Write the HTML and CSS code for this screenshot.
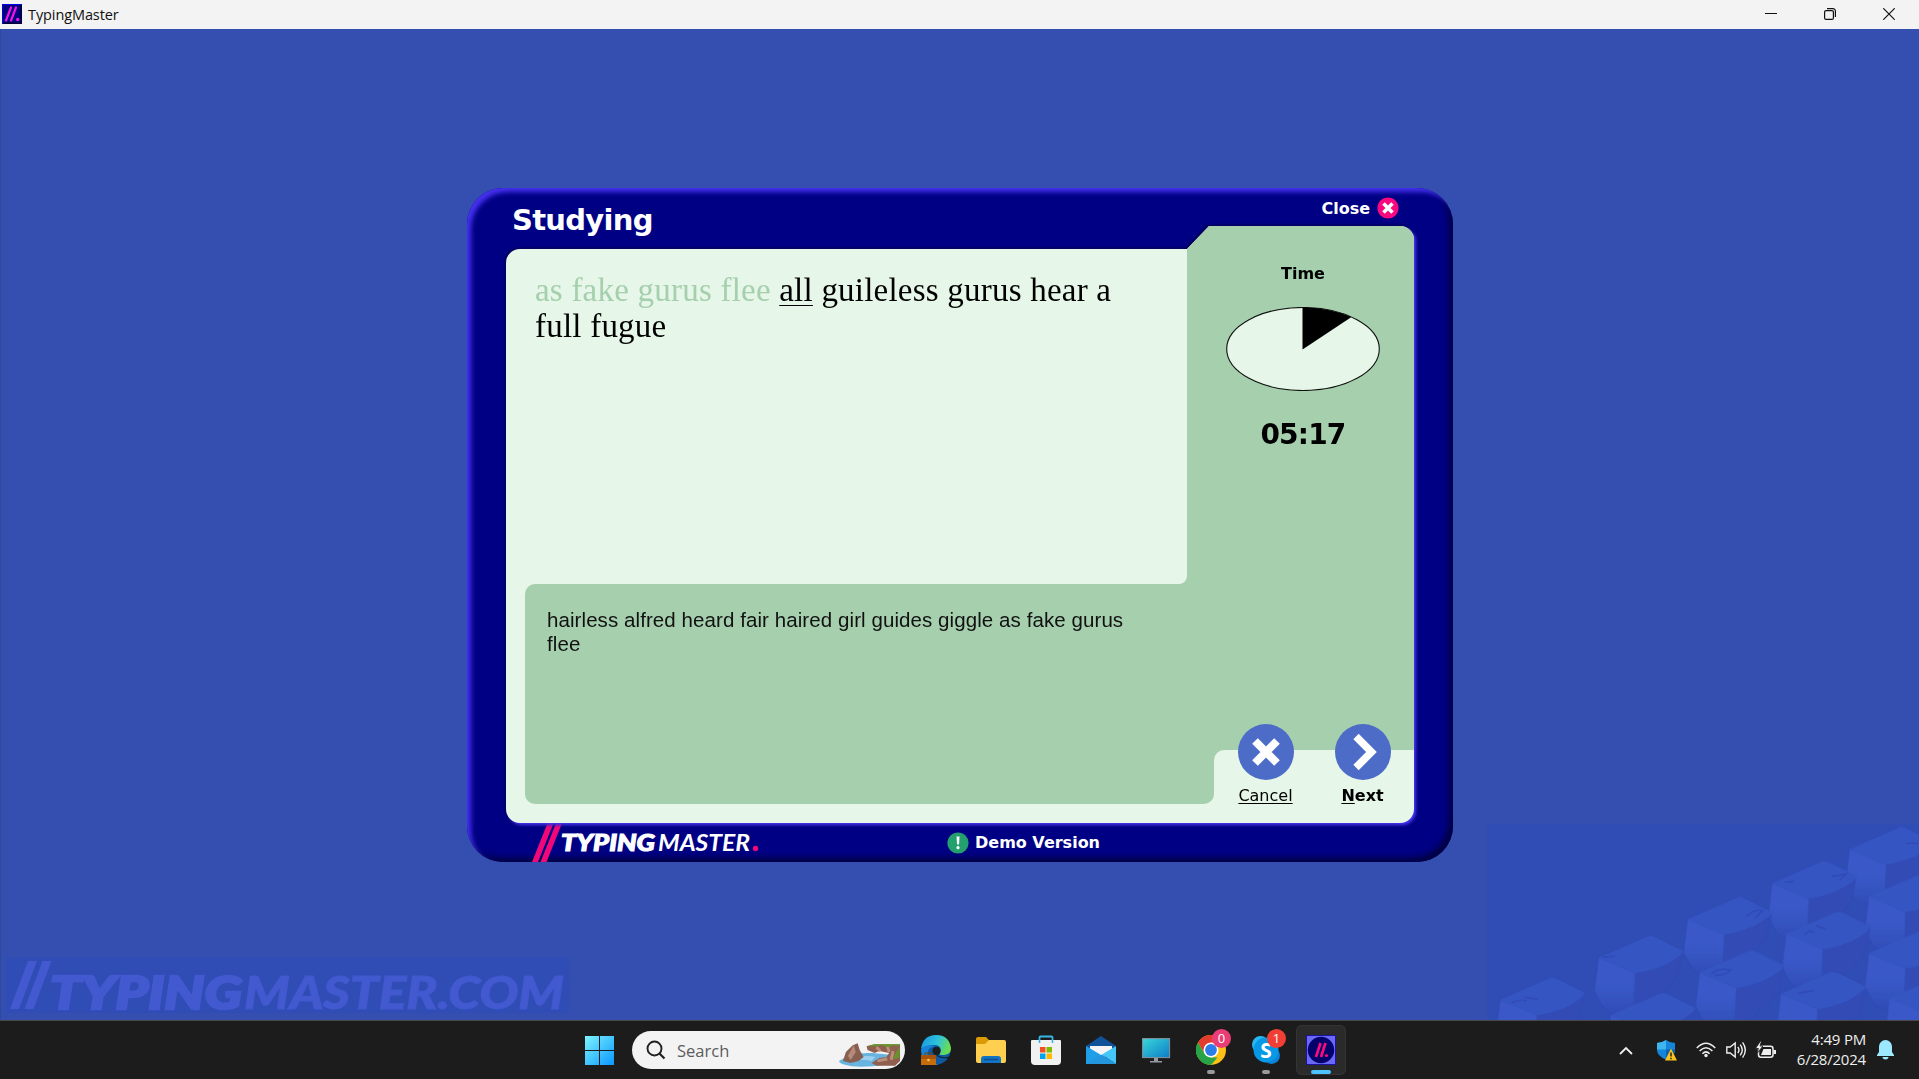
FILE: index.html
```html
<!DOCTYPE html>
<html lang="en">
<head>
<meta charset="utf-8">
<title>TypingMaster</title>
<link rel="stylesheet" href="styles.css">
</head>
<body>
<header class="titlebar">
  <svg class="app-icon" viewBox="0 0 20 20"><rect width="20" height="20" fill="#0000f0"/><rect x="1" y="1" width="19" height="19" fill="#020038"/><rect x="1" y="1" width="17.500" height="17.500" fill="#05007c"/><path d="M4 16.500 9 3.500M9 16.500l5-13" stroke="#f312e8" stroke-width="2.200" stroke-linecap="round"/><circle cx="15.700" cy="15.500" r="1.700" fill="#f312e8"/></svg>
  <span class="window-title">TypingMaster</span>
  <div class="window-buttons">
    <svg viewBox="0 0 12 12"><path d="M0 5.500h12" stroke="#111"/></svg>
    <svg viewBox="0 0 12 12"><rect x=".6" y="2.600" width="8.800" height="8.800" rx="1.500" fill="none" stroke="#111" stroke-width="1.200"/><path d="M3 .6h6a2.400 2.400 0 0 1 2.400 2.400v6" fill="none" stroke="#111" stroke-width="1.200"/></svg>
    <svg viewBox="0 0 12 12"><path d="M.3.3l11.400 11.400M11.700.3.3 11.700" stroke="#111" stroke-width="1.200"/></svg>
  </div>
</header>

<main class="desktop">
  <section class="dialog">
    <div class="dialog-head">
      <h1>Studying</h1>
      <div class="close"><span>Close</span><svg viewBox="0 0 22 22"><circle cx="11" cy="11" r="10.600" fill="#f9087f"/><path d="M6.500 6.500l9 9M15.500 6.500l-9 9" stroke="#fff" stroke-width="3.600"/></svg></div>
    </div>
    <div class="board">
      <svg class="board-shape" viewBox="0 0 908 597">
        <path fill="#e6f6e8" d="M14 23H681L703 0H894A14 14 0 0 1 908 14V583A14 14 0 0 1 894 597H14A14 14 0 0 1 0 583V37A14 14 0 0 1 14 23Z"/>
        <path fill="#a5cfad" d="M681 23 703 0H894A14 14 0 0 1 908 14V524H718A10 10 0 0 0 708 534V568A10 10 0 0 1 698 578H29A10 10 0 0 1 19 568V368A10 10 0 0 1 29 358H673A8 8 0 0 0 681 350Z"/>
      </svg>
      <div class="texts">
        <p class="prompt"><span class="done">as fake gurus flee</span> <span class="current">all</span> guileless gurus hear a<br>full fugue</p>
        <p class="typed">hairless alfred heard fair haired girl guides giggle as fake gurus<br>flee</p>
      </div>
      <aside class="side">
        <h2>Time</h2>
        <svg class="pie" viewBox="0 0 154 84"><ellipse cx="77" cy="42" rx="76.300" ry="41.500" fill="#e6f6e8" stroke="#111" stroke-width="1.100"/><path d="M76.500 42.500V.5Q104 .5 125.500 10Z" fill="#000"/></svg>
        <div class="clock">05:17</div>
        <div class="actions">
          <div class="action"><svg viewBox="0 0 56 56"><circle cx="28" cy="28" r="28" fill="#4c6cc8"/><path d="M17 17l22 22M39 17 17 39" stroke="#fff" stroke-width="8"/></svg><span class="cancel">Cancel</span></div>
          <div class="action"><svg viewBox="0 0 56 56"><circle cx="28" cy="28" r="28" fill="#4c6cc8"/><path d="M21 12.500 36.500 28 21 43.500" fill="none" stroke="#fff" stroke-width="7.500"/></svg><span class="next"><u>N</u>ext</span></div>
        </div>
      </aside>
    </div>
    <div class="dialog-foot">
      <svg class="logo" viewBox="0 0 230 40"><path d="M16 0h6L6 40H0ZM24.500 0h6L14.500 40h-6Z" fill="#f0087a"/><text x="29" y="29" class="logo-heavy" textLength="94" lengthAdjust="spacingAndGlyphs">TYPING</text><text x="126" y="29" class="logo-light" textLength="92" lengthAdjust="spacingAndGlyphs">MASTER</text><circle cx="223.500" cy="26.500" r="2.700" fill="#f0087a"/></svg>
      <div class="demo"><svg viewBox="0 0 22 22"><circle cx="11" cy="11" r="10.600" fill="#23a06e"/><path d="M9.500 4.500h3l-.5 8h-2z" fill="#fff"/><circle cx="11" cy="15.700" r="1.600" fill="#fff"/></svg><span>Demo Version</span></div>
    </div>
  </section>

  <svg class="watermark" viewBox="0 0 563 56"><g fill="#4259cf"><path d="M22 4h9L13 52H4ZM36.500 4h9L27.500 52h-9Z"/><text x="44" y="52" class="wm-heavy" textLength="192" lengthAdjust="spacingAndGlyphs">TYPING</text><text x="238" y="52" class="wm-bold" textLength="320" lengthAdjust="spacingAndGlyphs">MASTER.COM</text></g></svg>

  <svg class="keys" viewBox="52 12 1295 588">
    <defs><filter id="soft" x="-5%" y="-5%" width="110%" height="110%"><feGaussianBlur stdDeviation="2"/></filter>
    <linearGradient id="front" x1="0" y1="0" x2="0" y2="1"><stop offset=".45" stop-color="#3a59c8"/><stop offset="1" stop-color="#304cb5"/></linearGradient>
    <g id="key"><path d="M112 46 256-18 240 60 190 110 106 185Z" fill="#304cb5"/><path d="M4 0 112 46 108 160 70 175 20 150-8 100Z" fill="url(#front)"/><path d="M2 0 148-64Q160-68 172-64L256-22Q258-10 200 22 150 42 112 46Z" fill="#3655c2"/></g></defs>
    <g filter="url(#soft)">
      <use href="#key" x="1136" y="88"/><use href="#key" x="904" y="190"/><use href="#key" x="1194" y="230"/>
      <use href="#key" x="650" y="298"/><use href="#key" x="946" y="342"/><use href="#key" x="1194" y="400"/>
      <use href="#key" x="383" y="414"/><use href="#key" x="686" y="458"/><use href="#key" x="930" y="522"/><use href="#key" x="1256" y="535"/>
      <use href="#key" x="88" y="540"/><use href="#key" x="420" y="586"/>
      <g fill="none" stroke="#304cb8" stroke-width="5"><path d="M125 548q30-12 45-4m-5-12 40 6M400 412l35-4M830 290q22-24 48-18l-22 22M725 462q20-20 58-12-20 18-48 16M1085 170l42-8-18 20M945 188l28-4M1005 345q12-22 28-6m6-22 28 10M985 520l45-8M1310 70h35"/></g>
    </g>
  </svg>
</main>

<footer class="taskbar">
  <nav class="apps">
    <svg class="start" viewBox="0 0 29 29"><defs><linearGradient id="win" x2="1" y2="1"><stop stop-color="#7df4ff"/><stop offset="1" stop-color="#0a98ff"/></linearGradient></defs><path fill="url(#win)" d="M0 0h14v14H0zM15 0h14v14H15zM0 15h14v14H0zM15 15h14v14H15z"/></svg>
    <div class="search">
      <svg class="lens" viewBox="0 0 20 20"><circle cx="8.500" cy="8.500" r="7" fill="none" stroke="#222" stroke-width="1.900"/><path d="m13.500 13.500 5 5" stroke="#222" stroke-width="2.200"/></svg>
      <span>Search</span>
      <svg class="cove" viewBox="0 0 64 24"><path d="M0 18q12-9 34-8l20 2-6 10q-30 4-42 0-6-2-6-4z" fill="#68b4e0"/><path d="M10 17q14-6 27-3l-4 4q-12-3-20 2z" fill="#9bd1ee"/><path d="M4 18 7 9 14 2l5-2 2 7 4 7-5 4-8 2z" fill="#886052"/><path d="m15 2-6 11 3 4 5-8z" fill="#b58a78"/><path d="M28 3l8-2h26v17l-5 5H38l-5-3 8-5 7-1 3-4-10-2-5 2-7-3z" fill="#8f6050"/><path d="m38 4 4 4m7-5 2 6m-12 9 10-2m6-8-2 9" stroke="#ba8f7b" stroke-width="3"/><path d="m28 3 8-2h26l-1 2-6-1-4 2-8-2-5 1zM62 4l-1 11-6 1 3-7z" fill="#66962a"/></svg>
    </div>
    <div class="app"><svg viewBox="0 0 30 30"><defs><linearGradient id="e" x2="1" y2=".3"><stop stop-color="#1494e4"/><stop offset=".6" stop-color="#2ec3da"/><stop offset="1" stop-color="#67dc57"/></linearGradient></defs><circle cx="15" cy="15" r="14.500" fill="#0c59a4"/><path d="M0 14Q2 0 15 0 28 0 30 13c0 6-4 7-9 7-3 0-3-1-2-3 2-4-1-7-5-7-6 0-12 2-14 4z" fill="url(#e)"/><path d="M9 13c-5 5-2 14 9 17H10Q0 26 0 15c2-4 8-6 14-4z" fill="#1683d8"/><circle cx="15.500" cy="16" r="4.200" fill="#1b1d1f"/><path d="M16 20q7 4 13 1l-1 2q-8 1-12-2z" fill="#1b1d1f"/><rect y="20" width="15" height="10" fill="#c56c0c"/><path d="M0 20h15v4H0z" fill="#a8530a"/><path d="M4 20v-2h6v2" fill="none" stroke="#74400c"/><circle cx="7.500" cy="25" r="1.300" fill="#ffc843"/></svg></div>
    <div class="app"><svg viewBox="0 0 30 30"><path d="M0 4q0-2 2-2h8l3 3H28v8H0z" fill="#dc9a07"/><path d="M0 9h9l4-4h15q2 0 2 2v19q0 2-2 2H2q-2 0-2-2z" fill="#ffcf50"/><path d="M5 28v-4q0-3 3-3h14q3 0 3 3v4z" fill="#1474c4"/><path d="M8 24.500h14" stroke="#0b4f91" stroke-width="1.500"/></svg></div>
    <div class="app"><svg viewBox="0 0 30 30"><path d="M8.500 8V2.500q0-1 1-1h11q1 0 1 1V8" fill="none" stroke="#36b5e9" stroke-width="1.800"/><path d="M0 6q0-1 1-1h28q1 0 1 1v20q0 4-4 4H4q-4 0-4-4z" fill="#f1f1f1"/><path d="M8.500 8V5M21.500 8V5" stroke="#36b5e9" stroke-width="1.600"/><path d="M9 12h5.500v5.500H9z" fill="#f25022"/><path d="M15.500 12H21v5.500h-5.500z" fill="#7fba00"/><path d="M9 18.500h5.500V24H9z" fill="#00a4ef"/><path d="M15.500 18.500H21V24h-5.500z" fill="#ffb900"/></svg></div>
    <div class="app"><svg viewBox="0 0 30 30"><path d="M0 11 15 1l15 10-6 8H6z" fill="#10529a"/><path d="M4 11h22v8l-11 4-11-4z" fill="#f4f4f6"/><path d="M0 11 30 29H0z" fill="#1e9fe8"/><path d="M30 11 16 19.500 30 29z" fill="#45c6f8"/><path d="M16 19.500 30 29H0l15-9z" fill="#2396de"/></svg></div>
    <div class="app"><svg viewBox="0 0 30 30"><defs><linearGradient id="mon" x2="1" y2="1"><stop stop-color="#37d8d8"/><stop offset="1" stop-color="#0e7bc8"/></linearGradient></defs><rect x="1.600" y="3.600" width="27" height="19" fill="url(#mon)" stroke="#8396a0" stroke-width="1"/><path d="M13 23h4v3h4v1.500H9V26h4z" fill="#9299a0"/></svg></div>
    <div class="app running"><svg viewBox="0 0 30 30"><circle cx="15" cy="15" r="15" fill="#fbc116"/><path d="M2 7.500A15 15 0 0 1 28 7.500H15L8.500 18.750z" fill="#e33b2e"/><path d="M2 7.500 8.500 18.750 15 22.500h6.500L15 30A15 15 0 0 1 2 7.500z" fill="#27a348"/><circle cx="15" cy="15" r="7.500" fill="#fff"/><circle cx="15" cy="15" r="5.900" fill="#2b7de9"/></svg><b class="badge pink">0</b></div>
    <div class="app running"><svg viewBox="0 0 30 30"><circle cx="9.500" cy="9.500" r="8.500" fill="#28b7f2"/><circle cx="20.500" cy="20.500" r="8.500" fill="#0a83d9"/><circle cx="15" cy="15" r="12.500" fill="#0799e5"/><text x="15" y="22.500" class="skype">S</text></svg><b class="badge red">1</b></div>
    <div class="app active"><svg viewBox="0 0 30 30"><rect x=".5" y=".5" width="29" height="29" fill="#6a68f6" stroke="#1a12a0"/><circle cx="15" cy="15" r="13.200" fill="#04006c"/><path d="m10 22 4.500-14M15 22l4.500-14" stroke="#fa0b7e" stroke-width="2.600"/><circle cx="20.500" cy="20.500" r="1.600" fill="#fa0b7e"/></svg></div>
  </nav>
  <div class="tray">
    <svg class="chev" viewBox="0 0 14 9"><path d="m1 8 6-6 6 6" fill="none" stroke="#eee" stroke-width="1.800"/></svg>
    <svg class="shield" viewBox="0 0 20 21"><path d="M0 3q5 0 9-3 4 3 9 3v7q0 6-9 9.500Q0 16 0 10z" fill="#1485d8"/><path d="M9 0Q5 3 0 3v6.500h9z" fill="#3fb5f0"/><path d="M9 9.500h9V10q0 6-9 9.500z" fill="#0b62b4"/><path d="M14 8.500 20 20.500H8z" fill="#fcc21a"/><path d="M14 12.500v4m0 1.300v1.500" stroke="#222" stroke-width="1.500"/></svg>
    <svg class="wifi" viewBox="0 0 20 16"><g fill="none" stroke="#eee" stroke-width="1.500"><path d="M.8 6q9.200-9.600 18.400 0M3.600 9q6.400-6.600 12.800 0M6.400 11.700q3.600-3.600 7.200 0"/></g><circle cx="10" cy="13.500" r="1.700" fill="#eee"/></svg>
    <svg class="vol" viewBox="0 0 20 18"><g fill="none" stroke="#eee" stroke-width="1.400"><path d="M.8 6v6h3.400l5 4V2l-5 4zM11.800 6q2.400 3 0 6M14.200 3.600q4.200 5.400 0 10.800M16.600 1.400q5.400 7.600 0 15.200"/></g></svg>
    <svg class="batt" viewBox="0 0 20 17"><rect x="2.500" y="4.200" width="14.500" height="11" rx="2.500" fill="none" stroke="#eee" stroke-width="1.500"/><path d="M5 13 7.500 7H15v6zM17.500 8H20v4h-2.500z" fill="#eee"/><path d="M4.500-1-.5 6.500h3l-1.500 5L7 4H4l1.500-5z" fill="#eee" stroke="#1c1c1c" stroke-width=".8"/></svg>
    <div class="time"><span>4:49 PM</span><span>6/28/2024</span></div>
    <svg class="bell" viewBox="0 0 17 20"><path d="M8.500 0a6.500 6.500 0 0 1 6.500 6.500V12l2 3v1H0v-1l2-3V6.500A6.500 6.500 0 0 1 8.500 0zM5.500 17h6a3 2.400 0 0 1-6 0z" fill="#9be8ff"/></svg>
  </div>
</footer>
</body>
</html>
```
FILE: styles.css
```css
* { box-sizing: border-box; }
html, body { height: 100%; margin: 0; }
body { display: flex; flex-direction: column; overflow: hidden; background: #344fb0; font-family: "Open Sans", "Noto Sans", sans-serif; }
svg { display: block; flex: none; }
h1, h2, p { margin: 0; }

.titlebar { display: flex; align-items: center; height: 29px; padding: 0 24px 1px 2px; background: #f3f3f3; color: #111; }
.app-icon { width: 20px; height: 20px; }
.window-title { margin-left: 6px; font-size: 14.5px; line-height: 27px; letter-spacing: -.1px; }
.window-buttons { display: flex; gap: 47px; margin-left: auto; }
.window-buttons svg { width: 12px; height: 12px; }

.desktop { position: relative; display: flex; flex: 1; align-items: flex-start; justify-content: center; padding-top: 159px; border-left: 1px solid #2f48a0; }
.watermark { position: absolute; left: 5px; bottom: 7px; width: 563px; height: 56px; overflow: visible; background: #304cb5; }
.keys { position: absolute; right: 0; bottom: 0; width: 432px; height: 196px; background: #304cb5; }
.wm-heavy { font: italic 900 46px Lato, sans-serif; stroke: #4259cf; stroke-width: 2.5px; }
.wm-bold { font: italic 900 46px Lato, sans-serif; stroke: #4259cf; stroke-width: 1px; }

.dialog { display: flex; flex-direction: column; width: 986px; height: 674px; border-radius: 36px; padding: 0 39px; background: #000084; box-shadow: inset 5px 5px 5px -1px #4631ee, inset -5px -5px 6px -1px #000040; font-family: "DejaVu Sans", sans-serif; font-weight: 700; color: #fff; }
.dialog-head { display: flex; justify-content: space-between; height: 38px; padding: 9px 15px 0 6px; }
.dialog-head h1 { font-size: 29px; line-height: 46px; letter-spacing: -.7px; }
.close { display: flex; gap: 7px; height: 22px; align-items: center; font-size: 16px; line-height: 22px; }
.close span, .demo span { padding-top: 1px; }
.close svg { width: 22px; height: 22px; }

.board { position: relative; display: flex; flex: none; height: 597px; color: #000; filter: drop-shadow(2px 2px 1.5px #4a35fa) drop-shadow(-1px -1px 1px #000048); }
.board-shape { position: absolute; left: 0; top: 0; width: 908px; height: 597px; }
.texts, .side { position: relative; }
.texts { width: 681px; padding: 46px 0 0 29px; white-space: nowrap; font-weight: 400; }
.prompt { height: 336px; font: 33px/36px "Liberation Serif", serif; letter-spacing: .22px; }
.done { color: #a5cfad; }
.current { text-decoration: underline; text-decoration-thickness: 1px; text-underline-offset: 4px; }
.typed { padding-left: 12px; font: 20.5px/24px "Liberation Sans", sans-serif; letter-spacing: .08px; color: #111; }
.side { display: flex; flex-direction: column; align-items: center; width: 227px; padding-top: 37px; padding-left: 5px; }
.side h2 { font-size: 16px; line-height: 22px; }
.pie { width: 154px; height: 84px; margin-top: 22px; }
.clock { margin-top: 25px; font-size: 28px; line-height: 37px; letter-spacing: -.8px; }
.actions { display: flex; gap: 41px; margin: auto 0 0 22px; padding-bottom: 16px; }
.action { display: flex; flex-direction: column; align-items: center; width: 56px; font-size: 16px; line-height: 22px; }
.action svg { width: 56px; height: 56px; margin-bottom: 5px; }
.cancel { font-weight: 400; text-decoration: underline; text-underline-offset: 2px; }
.next u { text-underline-offset: 2px; }

.dialog-foot { display: flex; height: 39px; padding-left: 26px; }
.logo { width: 230px; height: 40px; margin-top: -1px; }
.logo-heavy { font: italic 900 23.5px Lato, sans-serif; fill: #fff; stroke: #fff; stroke-width: 1.1px; }
.logo-light { font: italic 700 23.5px Lato, sans-serif; fill: #fff; }
.demo { display: flex; gap: 6px; height: 39px; align-items: center; margin-left: 185px; font-size: 16px; line-height: 22px; }
.demo svg { width: 22px; height: 22px; }

.taskbar { display: flex; justify-content: space-between; height: 59px; padding: 0 25px 0 585px; border-top: 1px solid #484848; background: #1c1c1c; color: #eee; }
.apps { display: flex; align-items: center; }
.start { width: 29px; height: 29px; margin-right: 18px; }
.search { display: flex; align-items: center; width: 273px; height: 38px; margin-right: 6px; padding: 0 3px 0 14px; border-radius: 19px; background: #f3f3f3; color: #5c5c5c; font-size: 16.5px; }
.lens { width: 20px; height: 20px; margin-right: 11px; }
.cove { width: 63px; height: 24px; margin-left: auto; margin-top: 9px; }
.app { position: relative; display: grid; place-items: center; width: 50px; height: 50px; margin: 0 5px 0 0; border-radius: 6px; }
.app svg { width: 30px; height: 30px; }
.running::after, .active::after { content: ""; position: absolute; left: 21px; bottom: 1px; width: 8px; height: 4px; border-radius: 2px; background: #999; }
.active { background: #2a2a2a; box-shadow: inset 0 0 0 1px #343434; }
.active::after { left: 15px; width: 20px; background: #4cc2ff; }
.badge { position: absolute; left: 26px; top: 4px; width: 19px; height: 19px; border-radius: 50%; font-size: 13px; font-weight: 400; line-height: 19px; text-align: center; color: #fff; }
.pink { background: #ea3d75; }
.red { background: #f23f35; }
.skype { font: 700 21px "Open Sans", sans-serif; fill: #fff; text-anchor: middle; }
.tray { display: flex; align-items: center; }
.chev { width: 14px; height: 9px; margin-right: 24px; }
.shield { width: 20px; height: 21px; margin-right: 19px; }
.wifi { width: 20px; height: 16px; margin-right: 10px; }
.vol { width: 20px; height: 18px; margin-right: 10px; }
.batt { width: 20px; height: 17px; overflow: visible; }
.time { display: flex; flex-direction: column; width: 90px; margin-top: -3px; text-align: right; font-size: 15px; line-height: 20px; letter-spacing: -.2px; }
.bell { width: 17px; height: 20px; margin-left: 11px; }
```
